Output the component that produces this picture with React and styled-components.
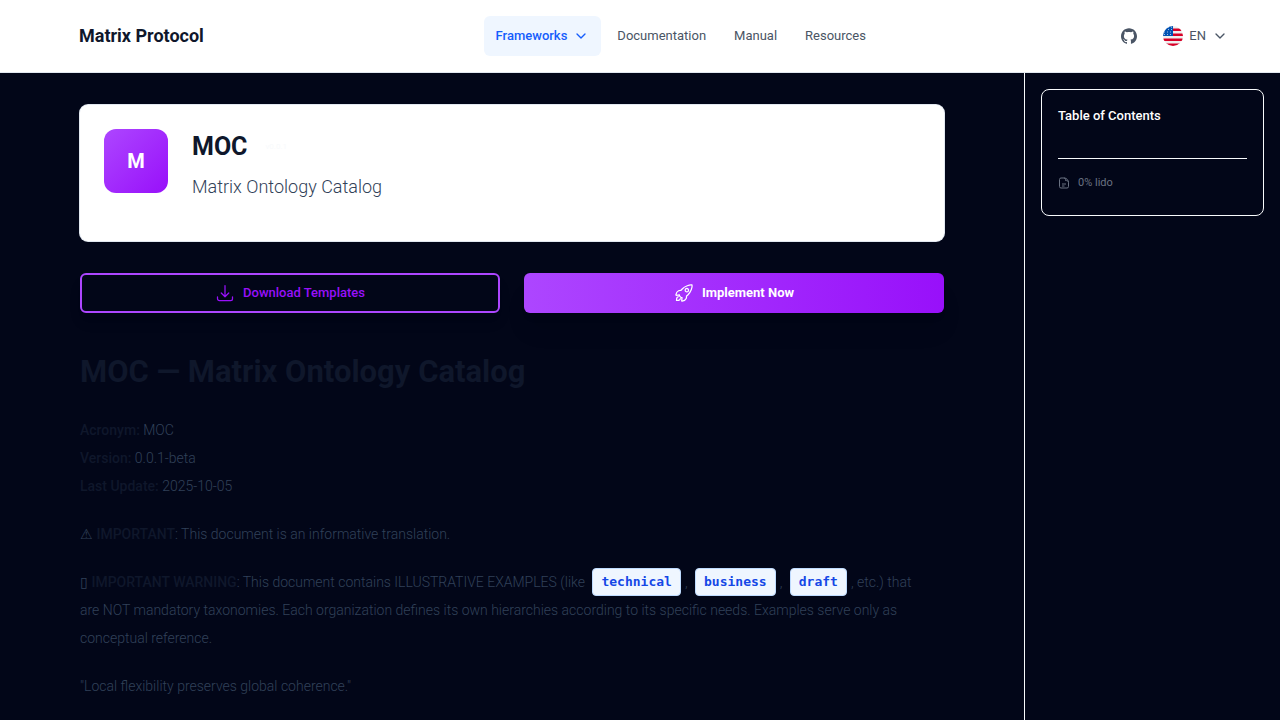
import React from 'react';
import styled, { createGlobalStyle } from 'styled-components';
import { HiOutlineArrowDownTray } from 'react-icons/hi2';
import { IoRocketOutline } from 'react-icons/io5';
import { SiGithub } from 'react-icons/si';
import { ChevronDown } from 'lucide-react';

const Global = createGlobalStyle`
  *, *::before, *::after { box-sizing: border-box; }
  body {
    margin: 0;
    background: #020618;
    color: #314158;
    font-family: Roboto, sans-serif;
    font-size: 14px;
    line-height: 28px;
  }
  h1, h2, p { margin: 0; }
  a { color: inherit; text-decoration: none; }
  button { font: inherit; cursor: pointer; }
`;

const Page = styled.div`
  display: flex;
  flex-direction: column;
  height: 100vh;
  overflow: hidden;
`;

const Header = styled.header`
  flex: none;
  display: grid;
  grid-template-columns: 8fr auto 7fr;
  align-items: center;
  padding: 16px 48px 16px 79px;
  background: #fff;
  border-bottom: 1px solid #e2e8f0;
  font-size: 13px;
  line-height: 20px;
`;

const Brand = styled.a`
  justify-self: start;
  color: #0f172b;
  font-size: 18px;
  font-weight: 700;
`;

const Nav = styled.nav`
  display: flex;
  gap: 4px;
`;

const NavItem = styled.a`
  display: flex;
  align-items: center;
  gap: 6px;
  height: 40px;
  padding: 0 12px;
  border-radius: 6px;
  font-weight: ${(p) => (p.$active ? 500 : 400)};
  color: ${(p) => (p.$active ? '#155dfc' : '#4a5565')};
  background: ${(p) => (p.$active ? '#eff6ff' : 'transparent')};
`;

const Tools = styled.div`
  justify-self: end;
  display: flex;
  align-items: center;
  gap: 22px;
  color: #4a5565;
`;

const IconLink = styled.a`
  display: flex;
`;

const LanguageButton = styled.button`
  display: flex;
  align-items: center;
  gap: 6px;
  padding: 6px 4px;
  border: 0;
  background: none;
  color: #4a5565;
`;

const Body = styled.div`
  flex: 1;
  min-height: 0;
  display: grid;
  grid-template-columns: minmax(0, 1fr) 256px;
`;

const Main = styled.main`
  display: flex;
  flex-direction: column;
  padding: 32px 80px;
`;

const Hero = styled.section`
  display: flex;
  gap: 24px;
  padding: 24px 24px 40px;
  border-radius: 8px;
  background: #fff;
  box-shadow: 0 0 0 1px #e2e8f0;
`;

const Tile = styled.div`
  display: grid;
  place-items: center;
  width: 64px;
  height: 64px;
  border-radius: 12px;
  background: linear-gradient(135deg, #ad46ff, #9810fa);
  color: #fff;
  font-size: 20px;
  font-weight: 700;
`;

const HeroText = styled.div`
  display: flex;
  flex-direction: column;
  gap: 8px;
`;

const TitleRow = styled.div`
  display: flex;
  align-items: center;
  gap: 18px;
`;

const Title = styled.h1`
  color: #0f172b;
  font-size: 25px;
  font-weight: 700;
  line-height: 36px;
`;

const VersionBadge = styled.span`
  color: #f8fafc;
  font-size: 8px;
  line-height: 20px;
`;

const Subtitle = styled.p`
  color: #314158;
  font-size: 18px;
  font-weight: 300;
`;

const Actions = styled.div`
  display: grid;
  grid-template-columns: 1fr 1fr;
  gap: 24px;
  margin-top: 32px;
`;

const ActionButton = styled.button`
  display: flex;
  align-items: center;
  justify-content: center;
  gap: 8px;
  height: 40px;
  padding: 0;
  border: ${(p) => (p.$primary ? '0' : '2px solid #ad46ff')};
  border-radius: 6px;
  background: ${(p) => (p.$primary ? 'linear-gradient(90deg, #ad46ff, #9810fa)' : 'transparent')};
  color: ${(p) => (p.$primary ? '#fff' : '#9810fa')};
  font-size: 13px;
  font-weight: ${(p) => (p.$primary ? 700 : 500)};
  line-height: 20px;
  box-shadow: ${(p) => (p.$primary ? '0 20px 25px -5px #0000001a' : '0 10px 15px -3px #0000001a')},
    0 8px 10px -6px #0000001a;
`;

const Article = styled.article`
  display: flex;
  flex-direction: column;
  gap: 20px;
  padding-top: 39px;
  font-weight: 300;
`;

const Heading = styled.h2`
  margin-bottom: 4px;
  color: #0f172b;
  font-size: 31px;
  font-weight: 700;
  line-height: 40px;
`;

const Strong = styled.strong`
  color: #0f172b;
  font-weight: 500;
`;

const Code = styled.code`
  display: inline-block;
  height: 28px;
  margin: 0 4px;
  padding: 0 8px;
  border: 1px solid #bedbff;
  border-radius: 4px;
  background: #eff6ff;
  color: #1447e6;
  font-family: 'DejaVu Sans Mono', monospace;
  font-size: 13px;
  font-weight: 700;
  line-height: 26px;
  vertical-align: top;
`;

const Aside = styled.aside`
  padding: 16px;
  border-left: 1px solid #f8fafc;
`;

const Contents = styled.section`
  padding: 16px;
  border: 1px solid #f8fafc;
  border-radius: 8px;
`;

const ContentsTitle = styled.h2`
  padding-bottom: 32px;
  border-bottom: 1px solid #f8fafc;
  color: #fff;
  font-size: 13px;
  font-weight: 500;
  line-height: 20px;
`;

const Progress = styled.p`
  display: flex;
  align-items: center;
  gap: 8px;
  padding: 16px 0 8px;
  color: #6a7282;
  font-size: 11px;
  line-height: 16px;
`;

function Flag() {
  return (
    <svg width="20" height="20" viewBox="0 0 20 20" aria-hidden="true">
      <defs><clipPath id="disc"><circle cx="10" cy="10" r="10" /></clipPath></defs>
      <g clipPath="url(#disc)">
        <path fill="#eee" d="M0 0h20v20H0z" />
        <path fill="#d80027" d="M9 2.5h11V5H9zM9 7.5h11V10H9zM0 12.5h20V15H0zM0 17.5h20V20H0z" />
        <path fill="#0052b4" d="M0 0h10v10H0z" />
        <path stroke="#eee" strokeWidth="1" strokeDasharray="1 2" strokeOpacity="0.7" d="M2 3.5h8M1 6h9M1 8.5h9M5 1.2h5" />
      </g>
    </svg>
  );
}

function FileIcon() {
  return (
    <svg width="12" height="12" viewBox="0 0 24 24" fill="none" stroke="currentColor" strokeWidth="2" aria-hidden="true">
      <path d="M12 2H6a3 3 0 0 0-3 3v14a3 3 0 0 0 3 3h12a3 3 0 0 0 3-3V11a9 9 0 0 0-9-9M12 2c3 0 3 2 3 5 3 0 6 1 6 4M8 14h8M8 18h5" />
    </svg>
  );
}

export default function App() {
  return (
    <Page>
      <Global />
      <Header>
        <Brand href="#">Matrix Protocol</Brand>
        <Nav>
          <NavItem href="#" $active>Frameworks <ChevronDown size={16} /></NavItem>
          <NavItem href="#">Documentation</NavItem>
          <NavItem href="#">Manual</NavItem>
          <NavItem href="#">Resources</NavItem>
        </Nav>
        <Tools>
          <IconLink href="#" aria-label="GitHub"><SiGithub size={16} /></IconLink>
          <LanguageButton><Flag />EN<ChevronDown size={16} /></LanguageButton>
        </Tools>
      </Header>
      <Body>
        <Main>
          <Hero>
            <Tile>M</Tile>
            <HeroText>
              <TitleRow><Title>MOC</Title><VersionBadge>v0.0.1</VersionBadge></TitleRow>
              <Subtitle>Matrix Ontology Catalog</Subtitle>
            </HeroText>
          </Hero>
          <Actions>
            <ActionButton><HiOutlineArrowDownTray size={20} />Download Templates</ActionButton>
            <ActionButton $primary><IoRocketOutline size={20} />Implement Now</ActionButton>
          </Actions>
          <Article>
            <Heading>MOC — Matrix Ontology Catalog</Heading>
            <p>
              <Strong>Acronym:</Strong> MOC<br />
              <Strong>Version:</Strong> 0.0.1-beta<br />
              <Strong>Last Update:</Strong> 2025-10-05
            </p>
            <p>⚠ <Strong>IMPORTANT</Strong>: This document is an informative translation.</p>
            <p>
              ▯ <Strong>IMPORTANT WARNING</Strong>: This document contains ILLUSTRATIVE EXAMPLES (like <Code>technical</Code>, <Code>business</Code>, <Code>draft</Code>, etc.) that<br />
              are NOT mandatory taxonomies. Each organization defines its own hierarchies according to its specific needs. Examples serve only as<br />
              conceptual reference.
            </p>
            <p>"Local flexibility preserves global coherence."</p>
          </Article>
        </Main>
        <Aside>
          <Contents>
            <ContentsTitle>Table of Contents</ContentsTitle>
            <Progress><FileIcon />0% lido</Progress>
          </Contents>
        </Aside>
      </Body>
    </Page>
  );
}
